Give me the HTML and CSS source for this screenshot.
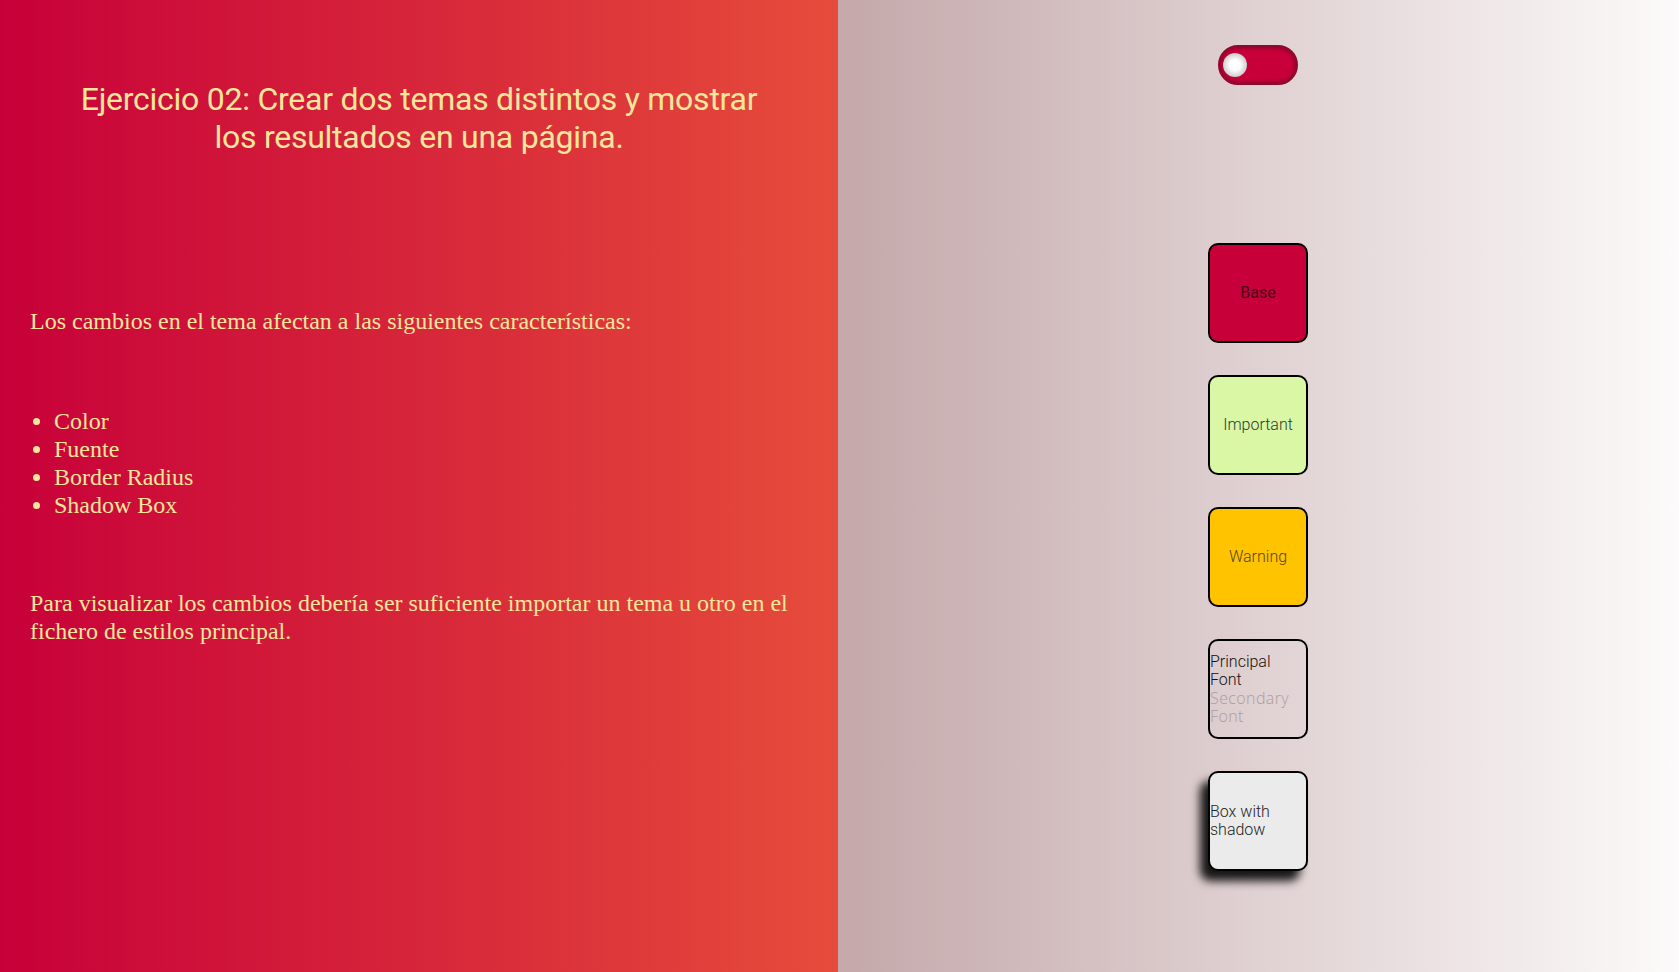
FILE: index.html
```html
<!DOCTYPE html>
<html lang="es">
<head>
<meta charset="utf-8">
<title>Ejercicio 02</title>
<link rel="stylesheet" href="styles.css">
</head>
<body>
<main class="page">
  <section class="info">
    <h1 class="title">Ejercicio 02: Crear dos temas distintos y mostrar los resultados en una página.</h1>
    <p class="text intro">Los cambios en el tema afectan a las siguientes características:</p>
    <ul class="features">
      <li>Color</li>
      <li>Fuente</li>
      <li>Border Radius</li>
      <li>Shadow Box</li>
    </ul>
    <p class="text">Para visualizar los cambios debería ser suficiente importar un tema u otro en el fichero de estilos principal.</p>
  </section>
  <section class="demo">
    <div class="toggle"><span class="knob"></span></div>
    <div class="boxes">
      <div class="box box-base"><span>Base</span></div>
      <div class="box box-important"><span>Important</span></div>
      <div class="box box-warning"><span>Warning</span></div>
      <div class="box box-fonts"><span><span class="principal">Principal Font</span><span class="secondary">Secondary Font</span></span></div>
      <div class="box box-shadow"><span>Box with shadow</span></div>
    </div>
  </section>
</main>
</body>
</html>
```
FILE: styles.css
```css
html, body {
  margin: 0;
  padding: 0;
  height: 100%;
}

.page {
  display: flex;
  height: 100vh;
  overflow: hidden;
}

.info {
  flex: 0 0 838px;
  box-sizing: border-box;
  padding: 0 30px;
  background: linear-gradient(to right, #c70039, #e64c3b);
  color: #f3e79c;
  font-family: "Liberation Serif", "Times New Roman", serif;
}

.title {
  font-family: Roboto, "Liberation Sans", sans-serif;
  font-weight: 400;
  font-size: 32px;
  line-height: 37.5px;
  text-align: center;
  max-width: 700px;
  margin: 81px auto 0;
  letter-spacing: -0.25px;
}

.text {
  font-size: 24px;
  line-height: 28px;
  margin: 151px 0 0;
}

.features {
  font-size: 24px;
  line-height: 28px;
  margin: 72px 0 0;
  padding-left: 24px;
}

.features + .text {
  margin-top: 70px;
}

.demo {
  flex: 1 1 auto;
  display: flex;
  flex-direction: column;
  align-items: center;
  padding-top: 45px;
  padding-right: 1px;
  background: linear-gradient(to right, #c4a8aa, #fcfafa);
  font-family: Roboto, "Liberation Sans", sans-serif;
  font-weight: 300;
  font-size: 16px;
}

.toggle {
  width: 80px;
  height: 40px;
  box-sizing: border-box;
  border-radius: 20px;
  background: #c70039;
  border: 2px solid #8e0a2c;
  box-shadow: inset 0 0 5px rgba(0, 0, 0, 0.45);
  display: flex;
  align-items: center;
  padding-left: 3px;
}

.knob {
  width: 24px;
  height: 24px;
  border-radius: 50%;
  background: radial-gradient(circle at 50% 50%, #ffffff 30%, #d4d4d4 65%, #8f8f8f 100%);
}

.boxes {
  display: flex;
  flex-direction: column;
  gap: 32px;
  margin-top: 158px;
}

.box {
  width: 100px;
  height: 100px;
  box-sizing: border-box;
  border: 2px solid #000;
  border-radius: 10px;
  display: flex;
  align-items: center;
  justify-content: center;
  line-height: 18px;
}

.box-base {
  background: #c70039;
  color: #4a0519;
  font-weight: 400;
}

.box-important {
  background: #daf7a6;
  color: #2f3a2f;
}

.box-warning {
  background: #ffc300;
  color: #5a4510;
}

.box-fonts {
  background: transparent;
  color: #111;
}

.principal,
.secondary {
  display: block;
}

.secondary {
  font-family: "Open Sans", "DejaVu Sans", sans-serif;
  font-weight: 300;
  color: #a99fa1;
  letter-spacing: 0.4px;
}

.box-shadow {
  background: #ebebeb;
  color: #222;
  box-shadow: -8px 10px 10px rgba(0, 0, 0, 0.9);
}
```
